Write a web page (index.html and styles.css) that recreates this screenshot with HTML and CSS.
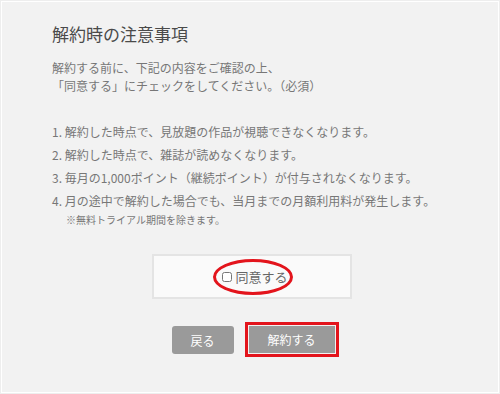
FILE: index.html
```html
<!DOCTYPE html>
<html lang="ja">

<head>
    <meta charset="UTF-8">
    <meta name="viewport" content="width=device-width, initial-scale=1.0">
    <title>解約時の注意事項</title>
    <link rel="stylesheet" href="styles.css">
</head>

<body>
    <div class="page">
        <h1 class="title">解約時の注意事項</h1>
        <p class="intro">解約する前に、下記の内容をご確認の上、<br>「同意する」にチェックをしてください。（必須）</p>

        <ul class="notes">
            <li>1. 解約した時点で、見放題の作品が視聴できなくなります。</li>
            <li>2. 解約した時点で、雑誌が読めなくなります。</li>
            <li>3. 毎月の1,000ポイント（継続ポイント）が付与されなくなります。</li>
            <li>4. 月の途中で解約した場合でも、当月までの月額利用料が発生します。
                <span class="sub">※無料トライアル期間を除きます。</span>
            </li>
        </ul>

        <div class="agree-box">
            <label class="agree">
                <input type="checkbox" class="agree-check">
                <span>同意する</span>
                <span class="mark-circle"></span>
            </label>
        </div>

        <div class="actions">
            <button class="btn btn-back">戻る</button>
            <button class="btn btn-cancel">解約する</button>
        </div>
    </div>
</body>

</html>
```

FILE: styles.css
```css
body {
    margin: 0;
    background-color: #eeeeee;
    font-family: "Noto Sans CJK JP", "Noto Sans", sans-serif;
    color: #777777;
}

.page {
    margin: 1px;
    border: 1px solid #ffffff;
    background-color: #f2f2f2;
    padding: 20px 46px 0 50px;
    box-sizing: border-box;
    height: 392px;
}

.title {
    margin: 0;
    font-size: 17px;
    line-height: 24px;
    font-weight: normal;
    color: #4a4a4a;
}

.intro {
    margin: 13px 0 0;
    font-size: 12px;
    line-height: 18px;
}

.notes {
    list-style: none;
    margin: 28px 0 0;
    padding: 0;
    font-size: 12px;
    line-height: 18px;
}

.notes li {
    margin-bottom: 5px;
}

.notes li:last-child {
    margin-bottom: 0;
}

.sub {
    display: block;
    margin-top: 3px;
    padding-left: 14px;
    font-size: 10px;
    line-height: 14px;
}

.agree-box {
    width: 200px;
    height: 45px;
    margin: 27px auto 0;
    box-sizing: border-box;
    border: 2px solid #e4e4e4;
    background-color: #fafafa;
    display: flex;
    justify-content: center;
    align-items: center;
}

.agree {
    position: relative;
    display: flex;
    align-items: center;
    gap: 3px;
    font-size: 13px;
    color: #666666;
    padding-left: 6px;
}

.agree-check {
    width: 10px;
    height: 10px;
    margin: 0;
}

.mark-circle {
    position: absolute;
    left: -3px;
    top: 50%;
    margin-top: -18px;
    width: 74px;
    height: 30px;
    border: 3px solid #e3141c;
    border-radius: 50%;
}

.actions {
    display: flex;
    justify-content: center;
    gap: 15px;
    margin-top: 27px;
    padding-left: 2px;
}

.btn {
    height: 28px;
    border: none;
    border-radius: 3px;
    background-color: #9a9a9a;
    color: #ffffff;
    font-family: "Noto Sans CJK JP", sans-serif;
    font-size: 12px;
    cursor: pointer;
}

.btn-back {
    width: 62px;
}

.btn-cancel {
    width: 86px;
    height: 27px;
    border-radius: 0;
    outline: 3px solid #e3141c;
    outline-offset: 1px;
}
```
